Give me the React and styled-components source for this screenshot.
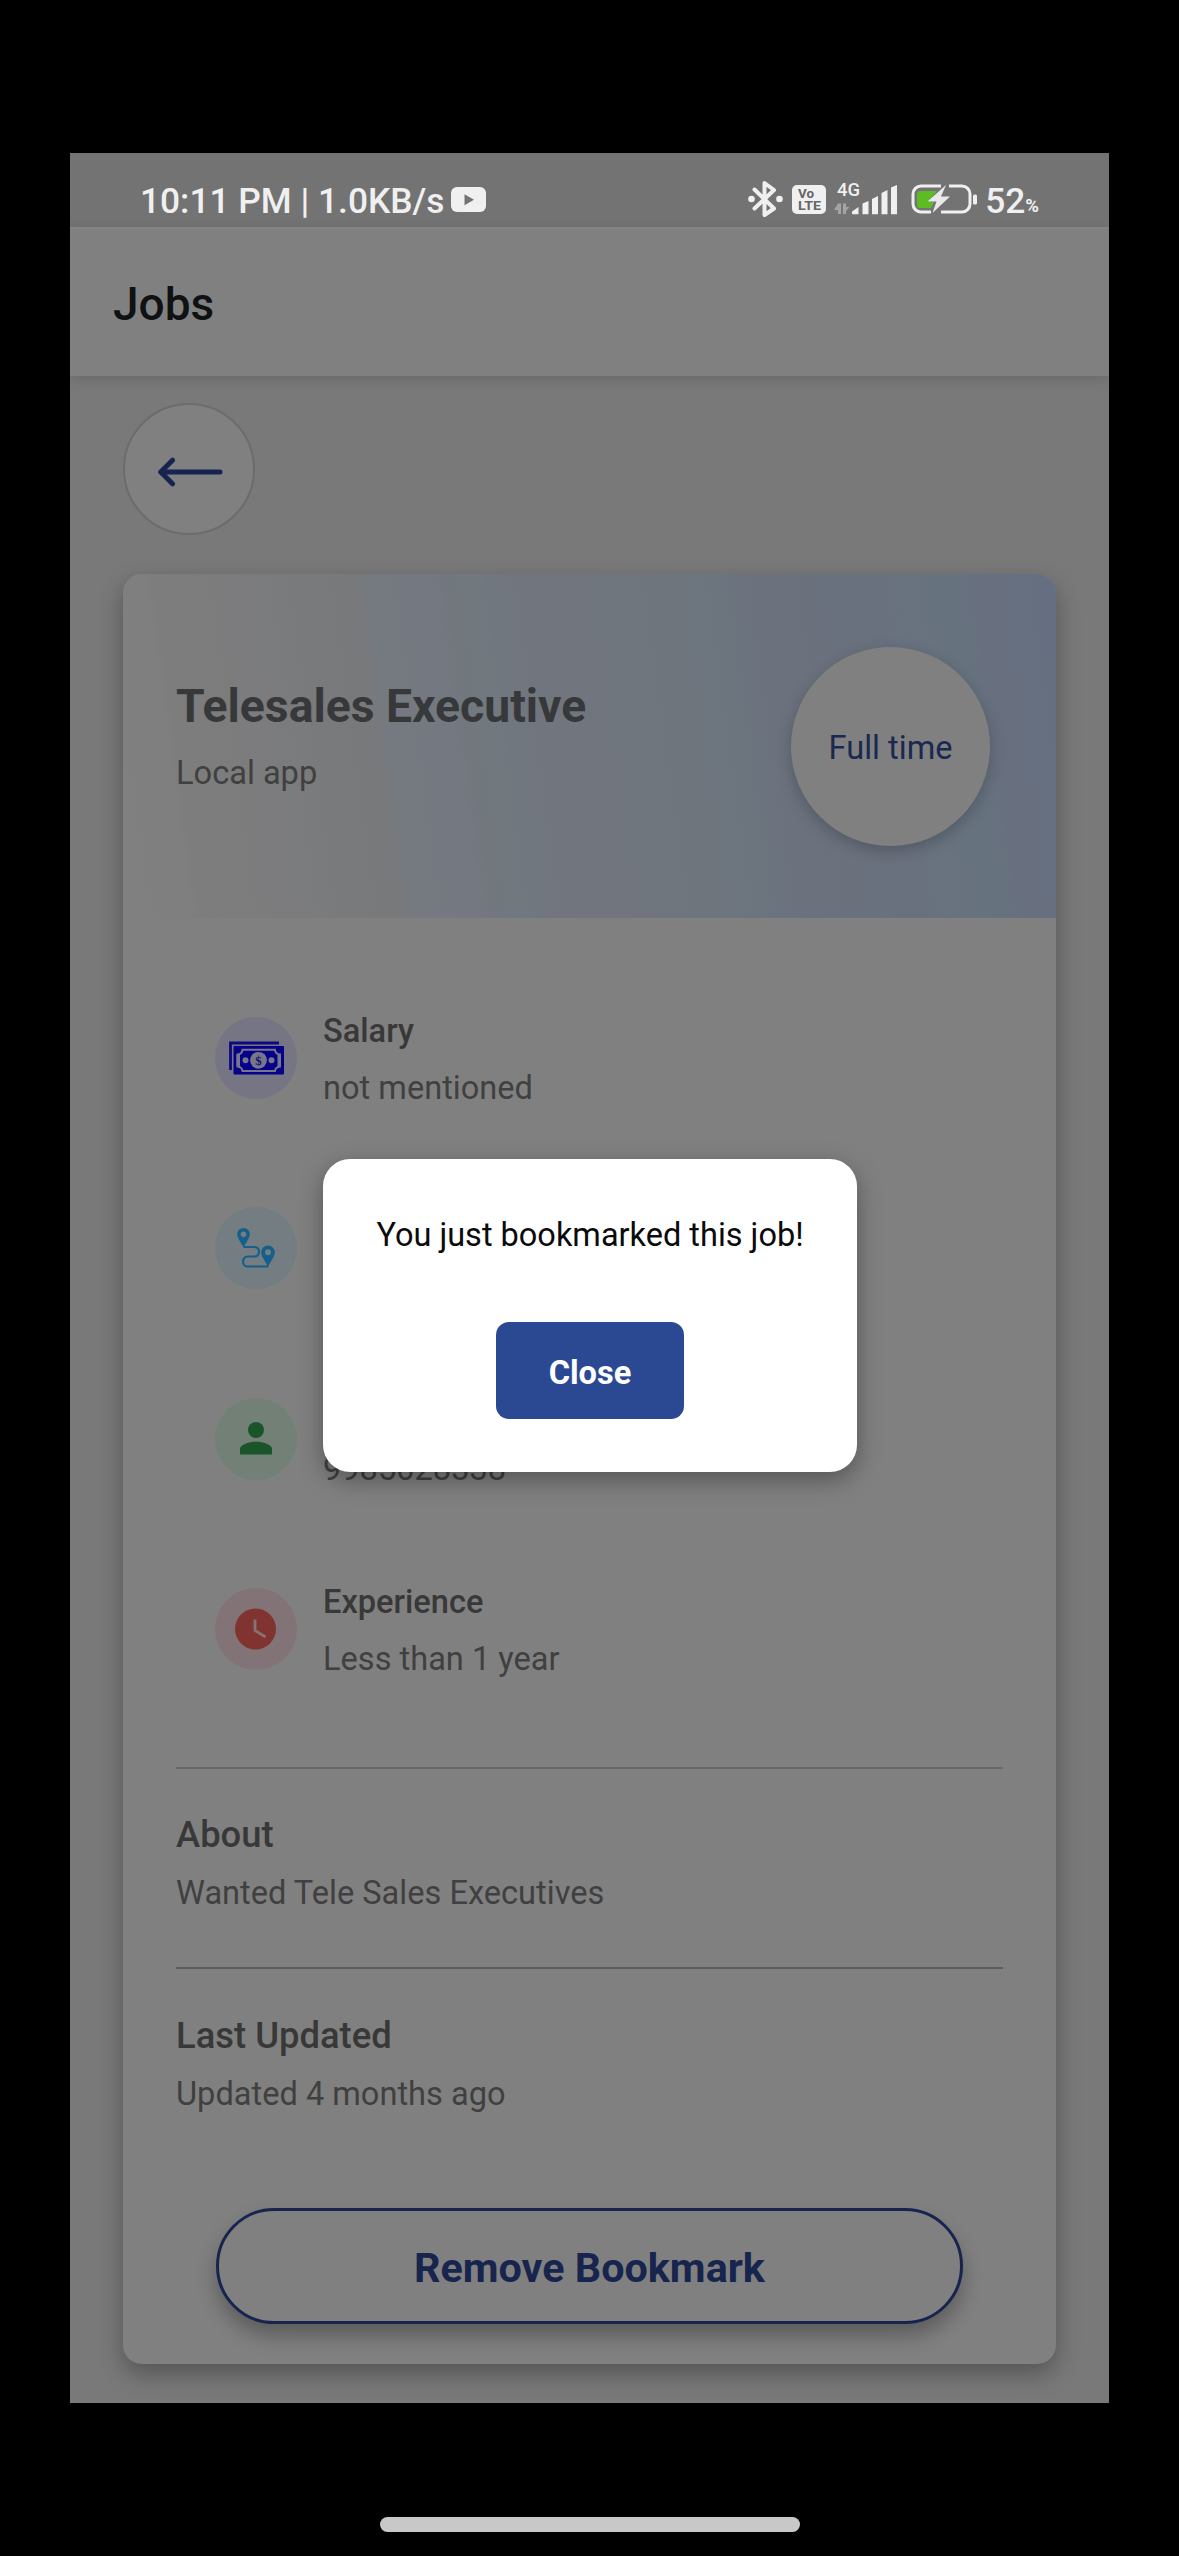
import React from "react";
import styled, { createGlobalStyle } from "styled-components";

const Global = createGlobalStyle`
  * { box-sizing: border-box; }
  body { margin: 0; background: #000; font-family: Roboto, "Noto Sans", sans-serif; }
`;

const Device = styled.div`
  width: 1179px;
  height: 2556px;
  background: #000;
  padding: 153px 70px 0;
  display: flex;
  flex-direction: column;
  align-items: center;
  overflow: hidden;
`;

const Screen = styled.main`
  position: relative;
  width: 1039px;
  height: 2250px;
  background: #797979;
  overflow: hidden;
  display: flex;
  flex-direction: column;
  flex-shrink: 0;
`;

const HomeBar = styled.div`
  width: 420px;
  height: 15px;
  margin-top: 114px;
  border-radius: 8px;
  background: #c8c8c8;
  flex-shrink: 0;
`;

const StatusBar = styled.header`
  height: 74px;
  background: #737373;
  color: #f0f0f0;
  display: flex;
  align-items: flex-start;
  justify-content: space-between;
  padding: 26px 70px 0 70px;
`;

const StatusGroup = styled.div`
  display: flex;
  align-items: flex-start;
  height: 44px;
`;

const Clock = styled.span`
  font-size: 35.3px;
  font-weight: 500;
  line-height: 44px;
  white-space: nowrap;
`;

const Level = styled(Clock)`
  margin-left: 7px;
`;

const Percent = styled.span`
  font-size: 18.5px;
  font-weight: 700;
  line-height: 24px;
  margin: 15px 0 0 0;
`;

const Glyph = styled.svg`
  display: block;
  flex-shrink: 0;
  margin-left: ${(p) => p.$left || 0}px;
  margin-top: ${(p) => p.$top || 0}px;
`;

const AppBar = styled.div`
  position: relative;
  height: 149px;
  flex-shrink: 0;
  background: #808080;
  border-top: 2px solid #848484;
  box-shadow: 0 4px 12px rgba(0, 0, 0, 0.12);
  padding: 48px 42px 0 43px;
`;

const AppTitle = styled.h1`
  margin: 0;
  font-size: 46px;
  line-height: 54px;
  font-weight: 500;
  color: #101113;
`;

const BackButton = styled.button`
  width: 132px;
  height: 132px;
  margin: 27px 0 39px 53px;
  padding: 5px 0 0 2px;
  border: 2px solid #6c6c6c;
  border-radius: 50%;
  background: #808080;
  display: flex;
  align-items: center;
  justify-content: center;
  flex-shrink: 0;
`;

const Card = styled.section`
  width: 933px;
  height: 1790px;
  margin-left: 53px;
  flex-shrink: 0;
  border-radius: 19px;
  background: #808080;
  box-shadow: 0 10px 24px rgba(0, 0, 0, 0.3);
  display: flex;
  flex-direction: column;
`;

const Banner = styled.div`
  height: 344px;
  border-radius: 19px 19px 0 0;
  padding: 73px 66px 0 53px;
  display: flex;
  justify-content: space-between;
  align-items: flex-start;
  background: linear-gradient(
    82deg,
    #808081 0%, #7f7f80 7%, #7e7d7e 8%, #7c7c7c 14%, #7c7c7e 15%, #7a7b7c 21%,
    #797a7b 22%, #78797b 28.8%, #757980 29.3%, #747880 36.5%, #72777e 38%, #71797f 40.5%,
    #71777f 42%, #70757e 45%, #6f757d 61%, #6d757e 62.5%, #6c747e 65%, #6b727e 70%,
    #6a717e 82%, #68737f 84%, #67727f 90%, #68707f 91.5%, #666f80 97.5%, #656f82 100%
  );
`;

const Heading = styled.div`
  display: flex;
  flex-direction: column;
  gap: 21px;
  padding-top: 32px;
`;

const JobTitle = styled.h2`
  margin: 0;
  font-size: 46.3px;
  line-height: 54px;
  font-weight: 700;
  color: #37383a;
  white-space: nowrap;
`;

const Text = styled.p`
  margin: 0;
  font-size: 32.6px;
  line-height: 38px;
  font-weight: 400;
  color: #404040;
  white-space: nowrap;
`;

const Label = styled.h3`
  margin: 0;
  font-size: 32.6px;
  line-height: 38px;
  font-weight: 500;
  color: #383838;
`;

const Badge = styled.div`
  width: 199px;
  height: 199px;
  border-radius: 50%;
  background: #808080;
  box-shadow: 0 5px 16px rgba(0, 0, 0, 0.22);
  display: flex;
  align-items: center;
  justify-content: center;
  font-size: 32.6px;
  line-height: 40px;
  padding: 2px 0 0;
  color: #1b284f;
`;

const Facts = styled.div`
  height: 849px;
  padding: 94px 0 0 92px;
  flex-shrink: 0;
`;

const Fact = styled.div`
  height: 190.4px;
  display: flex;
  gap: 26px;
`;

const Disc = styled.div`
  width: 82px;
  height: 82px;
  margin-top: 5px;
  border-radius: 50%;
  background: ${(p) => p.$tint};
  display: flex;
  align-items: center;
  justify-content: center;
`;

const FactText = styled.div`
  height: 95px;
  display: flex;
  flex-direction: column;
  justify-content: ${(p) => (p.$bottom ? "flex-end" : "space-between")};
`;

const Rule = styled.hr`
  width: 827px;
  height: 2px;
  margin: 0 0 0 53px;
  border: 0;
  background: ${(p) => p.$color};
  flex-shrink: 0;
`;

const Block = styled.div`
  height: 198px;
  padding: ${(p) => p.$top}px 53px 0;
  display: flex;
  flex-direction: column;
  gap: 18px;
  flex-shrink: 0;
`;

const BlockTitle = styled.h3`
  margin: 0;
  font-size: 36.4px;
  line-height: 42px;
  font-weight: 500;
  color: #383838;
`;

const RemoveButton = styled.button`
  width: 747px;
  height: 116px;
  margin: 41px 0 0 93px;
  padding: 3px 0 0;
  border: 3.5px solid #17254e;
  border-radius: 58px;
  background: #808080;
  box-shadow: 0 12px 20px rgba(0, 0, 0, 0.28);
  font: 700 41.3px/48px Roboto, sans-serif;
  color: #17254e;
  flex-shrink: 0;
`;

const Dialog = styled.div`
  position: absolute;
  left: 253px;
  top: 1006px;
  width: 534px;
  height: 313px;
  border-radius: 27px;
  background: #fff;
  box-shadow: 0 8px 24px rgba(0, 0, 0, 0.34);
  padding: 57px 0 0;
  display: flex;
  flex-direction: column;
  align-items: center;
`;

const Message = styled.p`
  margin: 0;
  font-size: 32.5px;
  line-height: 38px;
  color: #0b0b0b;
  white-space: nowrap;
`;

const CloseButton = styled.button`
  width: 188px;
  height: 97px;
  margin-top: 68px;
  padding: 4px 0 0;
  border: 0;
  border-radius: 13px;
  background: #2b4993;
  color: #fff;
  font: 700 32.6px/38px Roboto, sans-serif;
`;

const YouTube = () => (
  <Glyph width="35" height="25" viewBox="0 0 35 25" $left={6} $top={8}>
    <rect width="35" height="25" rx="6" fill="#f0f0f0" />
    <path d="M13.500 7.200v11l9.500-5.500z" fill="#737373" />
  </Glyph>
);

const Bluetooth = () => (
  <Glyph width="35" height="38" viewBox="0 0 35 38" $top={1}>
    <path d="M6.500 9.500 26 28.500 16.500 35V3L26 10 6.500 28.500" fill="none" stroke="#f0f0f0" strokeWidth="4" strokeLinejoin="round" strokeLinecap="round" />
    <circle cx="3.500" cy="19" r="3.300" fill="#f0f0f0" />
    <circle cx="31.500" cy="19" r="3.300" fill="#f0f0f0" />
  </Glyph>
);

const VoLte = () => (
  <Glyph width="34" height="29" viewBox="0 0 34 29" $left={9} $top={6}>
    <rect width="34" height="29" rx="5" fill="#f0f0f0" />
    <g fill="#666" fontFamily="Roboto, sans-serif" fontWeight="700">
      <text x="6" y="13" fontSize="12" textLength="16" lengthAdjust="spacingAndGlyphs">Vo</text>
      <text x="6" y="25.300" fontSize="13.500" textLength="23" lengthAdjust="spacingAndGlyphs">LTE</text>
    </g>
  </Glyph>
);

const Signal = () => (
  <Glyph width="66" height="36" viewBox="0 0 66 36" $left={8} $top={0}>
    <text x="3" y="16.800" fontSize="19" fontWeight="500" fontFamily="Roboto, sans-serif" fill="#f0f0f0" textLength="23" lengthAdjust="spacingAndGlyphs">4G</text>
    <g fill="#a4a4a4">
      <path d="M4 24.500H7V35H4V31H0z" />
      <path d="M9 24.500H12V28H15.500L12 32V35H9z" />
    </g>
    <g fill="#f0f0f0">
      <path d="M18 32.500 24.500 28v7.300H19a1 1 0 0 1-1-1z" />
      <path d="M28.500 24.500 34.500 22v13.300h-6z" />
      <path d="M38 20 44 17v18.300h-6z" />
      <path d="M47.500 14 53.500 11v24.300h-6z" />
      <path d="M57 8.500 63 6v29.300h-6z" />
    </g>
  </Glyph>
);

const Battery = () => (
  <Glyph width="68" height="32" viewBox="0 0 68 32" $left={10} $top={4}>
    <path d="M31 3H11a8 8 0 0 0-8 8v10a8 8 0 0 0 8 8H21M31 29H52a8 8 0 0 0 8-8V11a8 8 0 0 0-8-8H39" fill="none" stroke="#f0f0f0" strokeWidth="3" />
    <path d="M10 8H27L17.500 19H24L21 25H10a3 3 0 0 1-3-3V11a3 3 0 0 1 3-3z" fill="#5bbd22" />
    <path d="M36 2 17.500 18.500H26.500L22.500 30 40 13.500H31z" fill="#e9e9e9" />
    <rect x="63" y="11.500" width="4" height="10" rx="1.500" fill="#f0f0f0" />
  </Glyph>
);

const BackArrow = () => (
  <svg width="66" height="30" viewBox="0 0 66 30">
    <path d="M63 15H5M15.500 3.200 3.700 15 15.500 26.800" fill="none" stroke="#17244f" strokeWidth="5" strokeLinecap="round" strokeLinejoin="round" />
    <path d="M3.700 15 10 8.700V21.300z" fill="#17244f" />
  </svg>
);

const Money = () => (
  <svg width="55" height="34" viewBox="0 0 55 34">
    <path d="M1.500 29V2H50" fill="none" stroke="#0e0a80" strokeWidth="2.800" />
    <rect x="4.500" y="5" width="50.500" height="28.500" rx="1" fill="#06008a" />
    <path d="M13.500 8.800H46Q46.500 13 51 13.500V25.500Q46.500 26 46 30H13.500Q13 26 8.500 25.500V13.500Q13 13 13.500 8.800Z" fill="#06008a" stroke="#77768a" strokeWidth="2" />
    <path d="M8 14H10.500V25H8zM49 14H51.500V25H49z" fill="#77768a" stroke="#77768a" />
    <circle cx="29.500" cy="19.300" r="8.400" fill="#77768a" />
    <circle cx="16.500" cy="19.300" r="3" fill="#77768a" />
    <circle cx="42.500" cy="19.300" r="3" fill="#77768a" />
    <text x="29.500" y="23.800" fontSize="13" fontWeight="700" fontFamily="Liberation Serif, serif" textAnchor="middle" fill="#171170">$</text>
  </svg>
);

const Route = () => (
  <svg width="38" height="41" viewBox="0 0 38 41">
    <path d="M6.500 19H17.500C23.500 19 23.500 28.500 17.500 28.500H10.500C4.500 28.500 4.500 38.500 10.500 38.500H31" fill="none" stroke="#145f8c" strokeWidth="2.200" />
    <path fillRule="evenodd" fill="#145f8c" d="M6.500 0A6.300 6.300 0 0 1 12.800 6.300C12.800 10 8 16 6.500 19.500 5 16 .2 10 .2 6.300A6.300 6.300 0 0 1 6.500 0ZM6.500 3.500A2.800 2.800 0 1 0 6.500 9.100 2.800 2.800 0 0 0 6.500 3.500Z" />
    <path fillRule="evenodd" fill="#145f8c" d="M31 17.500A6.800 6.800 0 0 1 37.800 24.300C37.800 29 32.500 34.500 31 39.500 29.500 34.500 24.200 29 24.200 24.300A6.800 6.800 0 0 1 31 17.500ZM31 21.200A3 3 0 1 0 31 27.200 3 3 0 0 0 31 21.200Z" />
  </svg>
);

const Person = () => (
  <svg width="32" height="33" viewBox="0 0 32 33">
    <circle cx="16" cy="8" r="8" fill="#1a5529" />
    <path d="M0 32.500V27C0 22.500 9 19.800 16 19.800S32 22.500 32 27V32.500Z" fill="#1a5529" />
  </svg>
);

const ClockIcon = () => (
  <svg width="42" height="42" viewBox="0 0 42 42">
    <circle cx="20.500" cy="21" r="20.500" fill="#80332f" />
    <path d="M20 11.500V22.500L30.500 29" fill="none" stroke="#827376" strokeWidth="2.800" />
  </svg>
);

const facts = [
  { label: "Salary", value: "not mentioned", tint: "#757583", Icon: Money },
  { tint: "#737d82", Icon: Route },
  { value: "9985028338", tint: "#728075", Icon: Person },
  { label: "Experience", value: "Less than 1 year", tint: "#827476", Icon: ClockIcon },
];

const sections = [
  { title: "About", body: "Wanted Tele Sales Executives", line: "#686868", top: 45 },
  { title: "Last Updated", body: "Updated 4 months ago", line: "#5d5d5d", top: 46 },
];

export default function App() {
  return (
    <Device>
      <Global />
      <Screen>
        <StatusBar>
          <StatusGroup>
            <Clock>10:11 PM | 1.0KB/s</Clock>
            <YouTube />
          </StatusGroup>
          <StatusGroup>
            <Bluetooth />
            <VoLte />
            <Signal />
            <Battery />
            <Level>52</Level>
            <Percent>%</Percent>
          </StatusGroup>
        </StatusBar>
        <AppBar>
          <AppTitle>Jobs</AppTitle>
        </AppBar>
        <BackButton aria-label="Back">
          <BackArrow />
        </BackButton>
        <Card>
          <Banner>
            <Heading>
              <JobTitle>Telesales Executive</JobTitle>
              <Text>Local app</Text>
            </Heading>
            <Badge>Full time</Badge>
          </Banner>
          <Facts>
            {facts.map(({ label, value, tint, Icon }) => (
              <Fact key={tint}>
                <Disc $tint={tint}>
                  <Icon />
                </Disc>
                <FactText $bottom={!label}>
                  {label && <Label>{label}</Label>}
                  {value && <Text>{value}</Text>}
                </FactText>
              </Fact>
            ))}
          </Facts>
          {sections.map(({ title, body, line, top }) => (
            <React.Fragment key={title}>
              <Rule $color={line} />
              <Block $top={top}>
                <BlockTitle>{title}</BlockTitle>
                <Text>{body}</Text>
              </Block>
            </React.Fragment>
          ))}
          <RemoveButton>Remove Bookmark</RemoveButton>
        </Card>
        <Dialog role="dialog">
          <Message>You just bookmarked this job!</Message>
          <CloseButton>Close</CloseButton>
        </Dialog>
      </Screen>
      <HomeBar />
    </Device>
  );
}
